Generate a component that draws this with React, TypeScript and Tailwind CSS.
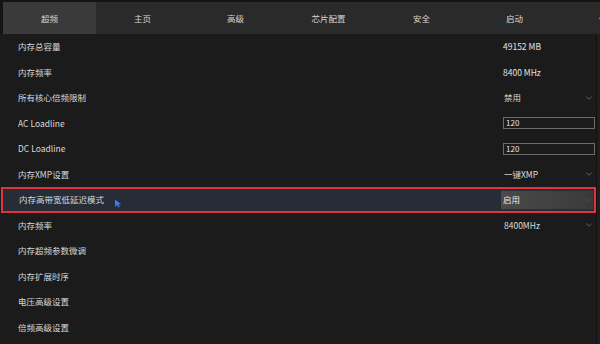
import { ChevronDown } from 'lucide-react';

type Row = {
    label: string;
    value?: string;
    kind?: 'text' | 'select' | 'input';
    active?: boolean;
};

const tabs = ['超频', '主页', '高级', '芯片配置', '安全', '启动', '保存'];

const rows: Row[] = [
    { label: '内存总容量', value: '49152 MB', kind: 'text' },
    { label: '内存频率', value: '8400 MHz', kind: 'text' },
    { label: '所有核心倍频限制', value: '禁用', kind: 'select' },
    { label: 'AC Loadline', value: '120', kind: 'input' },
    { label: 'DC Loadline', value: '120', kind: 'input' },
    { label: '内存XMP设置', value: '一键XMP', kind: 'select' },
    { label: '内存高带宽低延迟模式', value: '启用', kind: 'select', active: true },
    { label: '内存频率', value: '8400MHz', kind: 'select' },
    { label: '内存超频参数微调' },
    { label: '内存扩展时序' },
    { label: '电压高级设置' },
    { label: '倍频高级设置' },
];

function Cursor() {
    return (
        <svg width="8" height="9" viewBox="0 0 8 9" className="ml-[10px] mt-[8px]">
            <path d="M1 0.5 L1 8 L3 6 L4.6 8.6 L5.8 8 L4.4 5.4 L7.2 5.2 Z" fill="#3b7bff" />
        </svg>
    );
}

function ValueCell({ row }: { row: Row }) {
    if (!row.value) return null;
    if (row.kind === 'input') {
        return (
            <div className="w-[92px] h-[12px] border border-[#6b6b6b] flex items-center px-[2px] text-[8px] text-[#e6e6e6]">
                {row.value}
            </div>
        );
    }
    if (row.kind === 'select') {
        return (
            <div
                className={`w-[92px] h-[18px] flex items-center justify-between pr-[1px] text-[8.5px] ${
                    row.active
                        ? 'bg-gradient-to-r from-[#4a4a4a] to-[#3a3a3a] text-[#e8e8e8] -ml-[1px] pl-[2px]'
                        : 'pl-[1px] text-[#dcdcdc]'
                }`}
            >
                <span>{row.value}</span>
                <ChevronDown size={10} strokeWidth={1.5} className={row.active ? 'text-[#5a5a5a]' : 'text-[#8a8a8a]'} />
            </div>
        );
    }
    return <div className="w-[92px] text-[8.5px] text-[#e2e2e2]">{row.value}</div>;
}

export default function App() {
    return (
        <div
            className="w-[600px] h-[344px] bg-[#1b1b1b] overflow-hidden flex flex-col"
            style={{ fontFamily: '"Noto Sans CJK SC", "Noto Sans", sans-serif' }}
        >
            {/* tab bar */}
            <div className="h-[34px] bg-[#141414] pt-[2px] pl-[3px] flex shrink-0">
                <div className="flex flex-1 bg-[#2a2a2a] overflow-hidden">
                    {tabs.map((tab, i) => (
                        <div
                            key={tab}
                            className={`w-[93px] shrink-0 flex items-center justify-center text-[8.5px] text-[#d6d6d6] ${
                                i === 0 ? 'bg-[#3a3a3a]' : ''
                            }`}
                        >
                            {tab}
                        </div>
                    ))}
                </div>
            </div>

            {/* settings list */}
            <div className="flex flex-1">
                <div className="flex-1 flex flex-col">
                    {rows.map((row, i) => (
                        <div
                            key={i}
                            className={`h-[25.5px] shrink-0 flex items-center ${
                                row.active
                                    ? 'border-2 border-[#e0343c] bg-[#262d36] pl-[16px] ml-[1px]'
                                    : 'pl-[18px] pr-[1px]'
                            }`}
                        >
                            <div className="flex-1 flex items-center text-[8.5px] text-[#d9d9d9]">
                                <span>{row.label}</span>
                                {row.active && <Cursor />}
                            </div>
                            <div className="w-[92px]">
                                <ValueCell row={row} />
                            </div>
                        </div>
                    ))}
                </div>
                <div className="w-[4px] border-l border-[#111] bg-[#1f1f1f]" />
            </div>
        </div>
    );
}
